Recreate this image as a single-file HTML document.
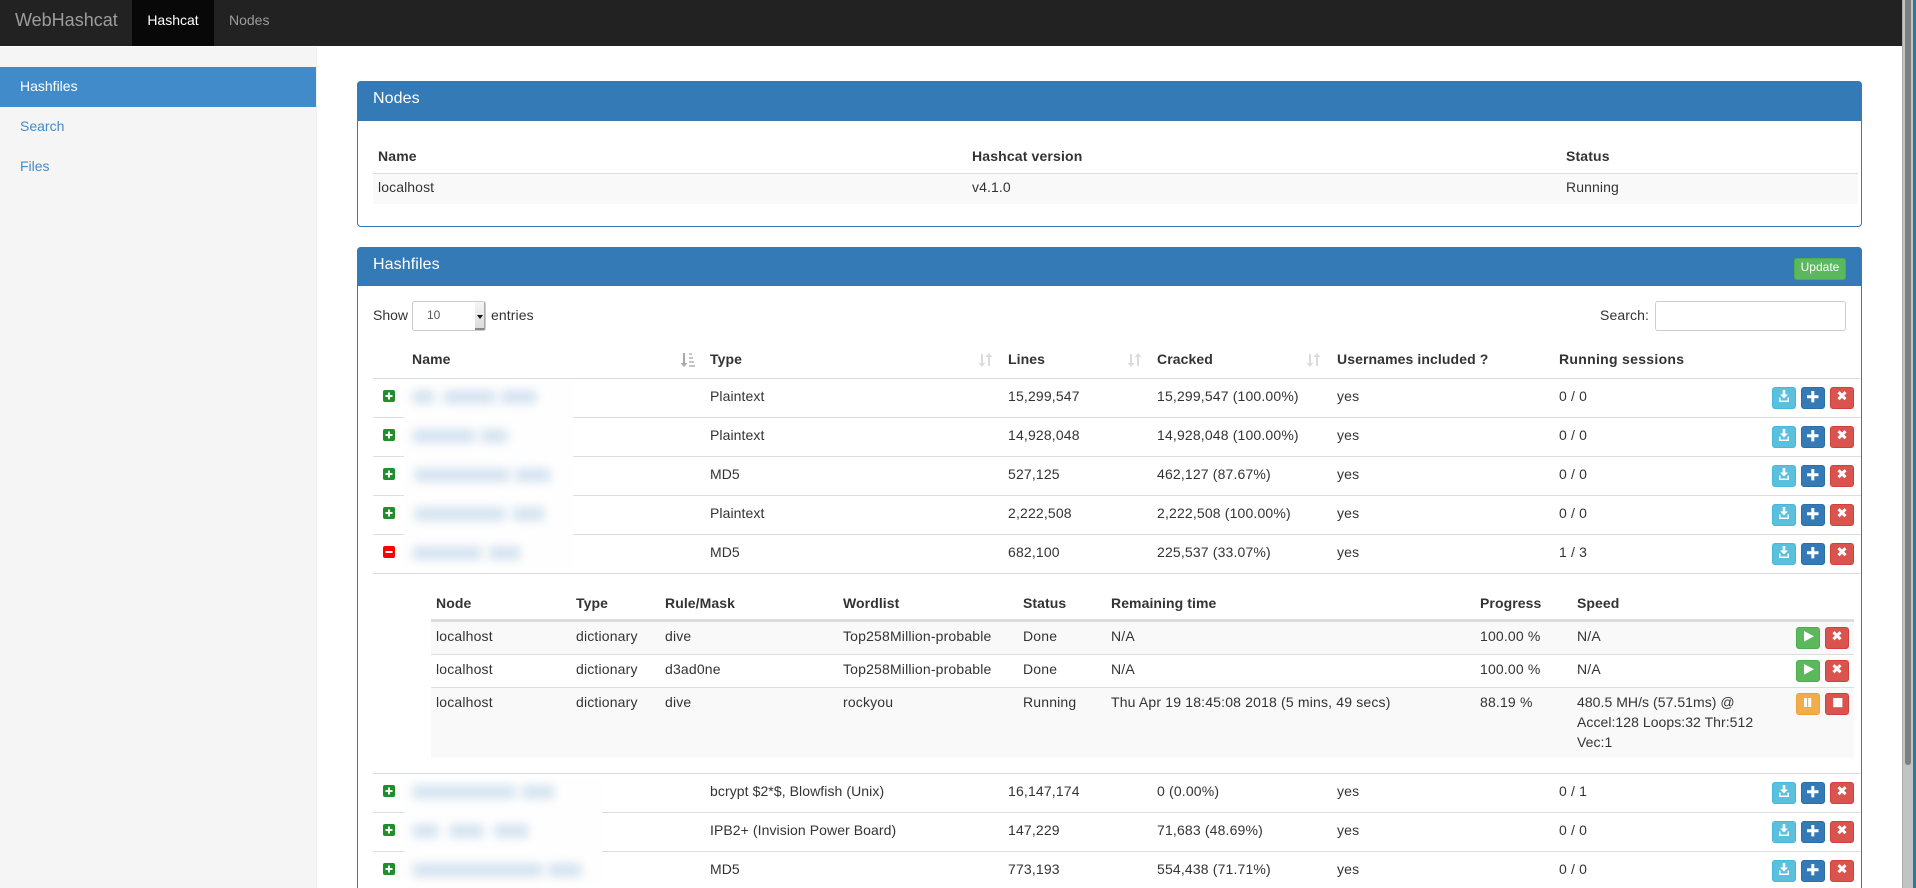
<!DOCTYPE html>
<html lang="en">
<head>
<meta charset="utf-8">
<title>WebHashcat</title>
<style>
*{box-sizing:border-box}
html,body{margin:0;padding:0;width:1916px;height:888px;overflow:hidden;background:#fff}
body{font-family:"Liberation Sans",Arial,sans-serif;font-size:14px;line-height:20px;color:#333;position:relative}
.abs{position:absolute}
#nav{position:absolute;left:0;top:0;width:1902px;height:46px;background:#222}
#nav div{position:absolute;top:0;height:46px;line-height:40px;white-space:nowrap}
#side{position:absolute;left:0;top:47px;width:317px;height:841px;background:#f5f5f5;border-right:1px solid #eee}
#side div{position:absolute;left:0;width:316px;height:40px;padding:9px 20px;color:#428bca}
.panel{position:absolute;left:357px;width:1505px;border:1px solid #337ab7;border-radius:4px;background:#fff}
.ph{position:absolute;left:-1px;top:-1px;width:1505px;background:#337ab7;color:#fff;font-size:16px;border-radius:4px 4px 0 0;padding:8px 16px;line-height:20px;letter-spacing:.1px}
table{border-collapse:separate;border-spacing:0;table-layout:fixed}
th{text-align:left;font-weight:bold;vertical-align:top}
td{vertical-align:top}
#nt{position:absolute;left:373px;top:141px;width:1485px}
#nt th{padding:5px;height:33px;border-bottom:1px solid #ddd;letter-spacing:.15px}
#nt td{padding:3px 5px 0;height:30px;background:#f9f9f9;letter-spacing:.1px}
#mt{position:absolute;left:373px;top:339px;width:1488px}
#mt>thead>tr>th{padding:10px 8px 0;height:40px;border-bottom:1px solid #ddd;letter-spacing:.1px}
#mt>tbody>tr>td{padding:7px 8px 0;height:39px;border-bottom:1px solid #ddd;letter-spacing:.16px}
#mt>tbody>tr>td.t{letter-spacing:.08px}
#mt>tbody>tr>td.n{padding:0;height:200px}
#st{margin:0 0 0 58px;width:1423px}
#st th{padding:19px 5px 0;height:48px;border-bottom:3px solid #ddd;letter-spacing:.08px}
#st td{padding:4px 5px 0;height:33px;border-bottom:1px solid #ddd;letter-spacing:.17px}
#st tr.o td{background:#f9f9f9}
#st tr.l td{height:70px;border-bottom:0}
.btn{display:inline-block;position:relative;width:24px;height:22px;border-radius:3px;border:1px solid;vertical-align:top;margin-left:5px}
.btn svg{position:absolute;left:-1px;top:-1px;width:24px;height:22px}
.i{background:#5bc0de;border-color:#46b8da}
.p{background:#337ab7;border-color:#2e6da4}
.d{background:#d9534f;border-color:#d43f3a}
.s{background:#5cb85c;border-color:#4cae4c}
.w{background:#f0ad4e;border-color:#eea236}
.acts{position:absolute;left:1767px}
.tog{position:absolute;left:383px;width:12px;height:12px;border-radius:2px;background:#1f8e2b}
.tog svg{display:block;width:12px;height:12px}
.halo{position:absolute;background:#fefefe}
.b{position:absolute;height:12px;background:#cfe0ef;filter:blur(5px)}
.sort{position:absolute;top:352px;width:16px;height:16px}
</style>
</head>
<body>
<div id="nav">
<div style="left:15px;font-size:18px;color:#9d9d9d">WebHashcat</div>
<div style="left:132px;width:82px;background:#080808;color:#fff;text-align:center">Hashcat</div>
<div style="left:229px;color:#9d9d9d">Nodes</div>
</div>
<div id="side">
<div style="top:20px;background:#428bca;color:#fff">Hashfiles</div>
<div style="top:60px">Search</div>
<div style="top:100px">Files</div>
</div>

<div class="panel" style="top:81px;height:146px"><div class="ph" style="height:40px">Nodes</div></div>
<table id="nt">
<colgroup><col style="width:594px"><col style="width:594px"><col style="width:297px"></colgroup>
<thead><tr><th>Name</th><th>Hashcat version</th><th>Status</th></tr></thead>
<tbody><tr><td>localhost</td><td>v4.1.0</td><td>Running</td></tr></tbody>
</table>

<div class="panel" style="top:247px;height:660px"><div class="ph" style="height:39px">Hashfiles</div></div>
<div class="btn s abs" style="left:1794px;top:258px;width:52px;font-size:12px;line-height:14px;color:#fff;text-align:center;margin:0;padding-top:1px">Update</div>

<div class="abs" style="left:373px;top:305px">Show</div>
<div class="abs" style="left:412px;top:301px;width:74px;height:30px;border:1px solid #ccc;border-radius:3px;background:#fff;font-size:12px;line-height:27px;color:#555;padding-left:14px">10
<div class="abs" style="left:62px;top:0;width:10px;height:28px;background:linear-gradient(#f6f6f6,#dcdcdc);border-right:1px solid #aaa;border-bottom:2px solid #888"></div>
<div class="abs" style="left:64px;top:13px;width:0;height:0;border-left:3px solid transparent;border-right:3px solid transparent;border-top:4px solid #111"></div>
</div>
<div class="abs" style="left:491px;top:305px;letter-spacing:.1px">entries</div>
<div class="abs" style="left:1600px;top:305px;letter-spacing:.1px">Search:</div>
<div class="abs" style="left:1655px;top:301px;width:191px;height:30px;border:1px solid #ccc;border-radius:3px;background:#fff"></div>

<table id="mt">
<colgroup><col style="width:31px"><col style="width:298px"><col style="width:298px"><col style="width:149px"><col style="width:180px"><col style="width:222px"><col style="width:213px"><col style="width:97px"></colgroup>
<thead><tr><th></th><th>Name</th><th>Type</th><th>Lines</th><th>Cracked</th><th>Usernames included ?</th><th style="letter-spacing:.3px">Running sessions</th><th></th></tr></thead>
<tbody>
<tr><td></td><td></td><td class="t">Plaintext</td><td>15,299,547</td><td>15,299,547 (100.00%)</td><td>yes</td><td>0 / 0</td><td></td></tr>
<tr><td></td><td></td><td class="t">Plaintext</td><td>14,928,048</td><td>14,928,048 (100.00%)</td><td>yes</td><td>0 / 0</td><td></td></tr>
<tr><td></td><td></td><td class="t">MD5</td><td>527,125</td><td>462,127 (87.67%)</td><td>yes</td><td>0 / 0</td><td></td></tr>
<tr><td></td><td></td><td class="t">Plaintext</td><td>2,222,508</td><td>2,222,508 (100.00%)</td><td>yes</td><td>0 / 0</td><td></td></tr>
<tr><td></td><td></td><td class="t">MD5</td><td>682,100</td><td>225,537 (33.07%)</td><td>yes</td><td>1 / 3</td><td></td></tr>
<tr><td colspan="8" class="n">
<table id="st">
<colgroup><col style="width:140px"><col style="width:89px"><col style="width:178px"><col style="width:180px"><col style="width:88px"><col style="width:369px"><col style="width:97px"><col style="width:219px"><col style="width:63px"></colgroup>
<thead><tr><th>Node</th><th>Type</th><th>Rule/Mask</th><th>Wordlist</th><th>Status</th><th>Remaining time</th><th>Progress</th><th>Speed</th><th></th></tr></thead>
<tbody>
<tr class="o"><td>localhost</td><td>dictionary</td><td>dive</td><td>Top258Million-probable</td><td>Done</td><td>N/A</td><td>100.00 %</td><td>N/A</td><td></td></tr>
<tr><td>localhost</td><td>dictionary</td><td>d3ad0ne</td><td>Top258Million-probable</td><td>Done</td><td>N/A</td><td>100.00 %</td><td>N/A</td><td></td></tr>
<tr class="o l"><td>localhost</td><td>dictionary</td><td>dive</td><td>rockyou</td><td>Running</td><td>Thu Apr 19 18:45:08 2018 (5 mins, 49 secs)</td><td>88.19 %</td><td style="letter-spacing:.05px">480.5 MH/s (57.51ms) @<br>Accel:128 Loops:32 Thr:512<br>Vec:1</td><td></td></tr>
</tbody>
</table>
</td></tr>
<tr><td></td><td></td><td class="t">bcrypt $2*$, Blowfish (Unix)</td><td>16,147,174</td><td>0 (0.00%)</td><td>yes</td><td>0 / 1</td><td></td></tr>
<tr><td></td><td></td><td class="t">IPB2+ (Invision Power Board)</td><td>147,229</td><td>71,683 (48.69%)</td><td>yes</td><td>0 / 0</td><td></td></tr>
<tr><td></td><td></td><td class="t">MD5</td><td>773,193</td><td>554,438 (71.71%)</td><td>yes</td><td>0 / 0</td><td></td></tr>
</tbody>
</table>

<svg class="sort" style="left:680px" viewBox="0 0 16 16"><path fill="#aaa" d="M3 1h2v10h2.500L4 15 .5 11H3z"/><path fill="#c4c4c4" d="M9 1h3v2H9zM9 5h4v2H9zM9 9h5v2H9zM9 13h6v2H9z"/></svg>
<svg class="sort" style="left:978px" viewBox="0 0 16 16"><path fill="#dcdcdc" d="M3 2h2v9h2.500L4 15 .5 11H3zM10 14V5H7.500L11 1l3.500 4H12v9z"/></svg>
<svg class="sort" style="left:1127px" viewBox="0 0 16 16"><path fill="#dcdcdc" d="M3 2h2v9h2.500L4 15 .5 11H3zM10 14V5H7.500L11 1l3.500 4H12v9z"/></svg>
<svg class="sort" style="left:1306px" viewBox="0 0 16 16"><path fill="#dcdcdc" d="M3 2h2v9h2.500L4 15 .5 11H3zM10 14V5H7.500L11 1l3.500 4H12v9z"/></svg>

<div class="halo" style="left:404px;top:381px;width:169px;height:186px"></div>
<div class="halo" style="left:404px;top:779px;width:198px;height:104px"></div>
<div class="b" style="left:413px;top:391px;width:21px"></div><div class="b" style="left:444px;top:391px;width:51px"></div><div class="b" style="left:501px;top:391px;width:35px"></div>
<div class="b" style="left:413px;top:430px;width:62px"></div><div class="b" style="left:481px;top:430px;width:26px"></div>
<div class="b" style="left:415px;top:469px;width:94px"></div><div class="b" style="left:515px;top:469px;width:35px"></div>
<div class="b" style="left:415px;top:508px;width:90px"></div><div class="b" style="left:513px;top:508px;width:31px"></div>
<div class="b" style="left:413px;top:547px;width:68px"></div><div class="b" style="left:489px;top:547px;width:31px"></div>
<div class="b" style="left:413px;top:786px;width:102px"></div><div class="b" style="left:522px;top:786px;width:32px"></div>
<div class="b" style="left:413px;top:825px;width:25px"></div><div class="b" style="left:450px;top:825px;width:33px"></div><div class="b" style="left:495px;top:825px;width:33px"></div>
<div class="b" style="left:413px;top:864px;width:129px"></div><div class="b" style="left:548px;top:864px;width:33px"></div>

<div class="tog" style="top:390px"><svg viewBox="0 0 12 12"><path fill="#fff" d="M5 2.500h2V5h2.500v2H7v2.500H5V7H2.500V5H5z"/></svg></div>
<div class="tog" style="top:429px"><svg viewBox="0 0 12 12"><path fill="#fff" d="M5 2.500h2V5h2.500v2H7v2.500H5V7H2.500V5H5z"/></svg></div>
<div class="tog" style="top:468px"><svg viewBox="0 0 12 12"><path fill="#fff" d="M5 2.500h2V5h2.500v2H7v2.500H5V7H2.500V5H5z"/></svg></div>
<div class="tog" style="top:507px"><svg viewBox="0 0 12 12"><path fill="#fff" d="M5 2.500h2V5h2.500v2H7v2.500H5V7H2.500V5H5z"/></svg></div>
<div class="tog" style="top:546px;background:#f00"><svg viewBox="0 0 12 12"><path fill="#fff" d="M2.500 5h7v2h-7z"/></svg></div>
<div class="tog" style="top:785px"><svg viewBox="0 0 12 12"><path fill="#fff" d="M5 2.500h2V5h2.500v2H7v2.500H5V7H2.500V5H5z"/></svg></div>
<div class="tog" style="top:824px"><svg viewBox="0 0 12 12"><path fill="#fff" d="M5 2.500h2V5h2.500v2H7v2.500H5V7H2.500V5H5z"/></svg></div>
<div class="tog" style="top:863px"><svg viewBox="0 0 12 12"><path fill="#fff" d="M5 2.500h2V5h2.500v2H7v2.500H5V7H2.500V5H5z"/></svg></div>

<svg width="0" height="0" style="position:absolute">
<symbol id="dl" viewBox="0 0 24 22"><path fill="#fff" d="M10.700 3h2.600v4.500h2.700L12 11.500 8 7.500h2.700zM7 10.500h1.500v3h7v-3H17V15H7z"/></symbol>
<symbol id="pl" viewBox="0 0 24 22"><path fill="#fff" d="M10.300 4h3v4.200h4.200v3h-4.200v4.200h-3v-4.200H6v-3h4.300z"/></symbol>
<symbol id="xx" viewBox="0 0 24 22"><path stroke="#fff" stroke-width="3" d="M8.500 5.200l7 7M15.500 5.200l-7 7"/></symbol>
<symbol id="pa" viewBox="0 0 24 22"><path fill="#fff" d="M8 4l10 5.300-10 5.300z"/></symbol>
<symbol id="pu" viewBox="0 0 24 22"><path fill="#fff" d="M8 5h3v9H8zM12.200 5h3v9h-3z"/></symbol>
<symbol id="so" viewBox="0 0 24 22"><path fill="#fff" d="M8.200 5h9.200v9.200H8.200z"/></symbol>
</svg>

<div class="acts" style="top:387px"><span class="btn i"><svg><use href="#dl"/></svg></span><span class="btn p"><svg><use href="#pl"/></svg></span><span class="btn d"><svg><use href="#xx"/></svg></span></div>
<div class="acts" style="top:426px"><span class="btn i"><svg><use href="#dl"/></svg></span><span class="btn p"><svg><use href="#pl"/></svg></span><span class="btn d"><svg><use href="#xx"/></svg></span></div>
<div class="acts" style="top:465px"><span class="btn i"><svg><use href="#dl"/></svg></span><span class="btn p"><svg><use href="#pl"/></svg></span><span class="btn d"><svg><use href="#xx"/></svg></span></div>
<div class="acts" style="top:504px"><span class="btn i"><svg><use href="#dl"/></svg></span><span class="btn p"><svg><use href="#pl"/></svg></span><span class="btn d"><svg><use href="#xx"/></svg></span></div>
<div class="acts" style="top:543px"><span class="btn i"><svg><use href="#dl"/></svg></span><span class="btn p"><svg><use href="#pl"/></svg></span><span class="btn d"><svg><use href="#xx"/></svg></span></div>
<div class="acts" style="top:782px"><span class="btn i"><svg><use href="#dl"/></svg></span><span class="btn p"><svg><use href="#pl"/></svg></span><span class="btn d"><svg><use href="#xx"/></svg></span></div>
<div class="acts" style="top:821px"><span class="btn i"><svg><use href="#dl"/></svg></span><span class="btn p"><svg><use href="#pl"/></svg></span><span class="btn d"><svg><use href="#xx"/></svg></span></div>
<div class="acts" style="top:860px"><span class="btn i"><svg><use href="#dl"/></svg></span><span class="btn p"><svg><use href="#pl"/></svg></span><span class="btn d"><svg><use href="#xx"/></svg></span></div>

<div class="acts" style="left:1791px;top:627px"><span class="btn s"><svg><use href="#pa"/></svg></span><span class="btn d"><svg><use href="#xx"/></svg></span></div>
<div class="acts" style="left:1791px;top:660px"><span class="btn s"><svg><use href="#pa"/></svg></span><span class="btn d"><svg><use href="#xx"/></svg></span></div>
<div class="acts" style="left:1791px;top:693px"><span class="btn w"><svg><use href="#pu"/></svg></span><span class="btn d"><svg><use href="#so"/></svg></span></div>

<div class="abs" style="left:1902px;top:0;width:11px;height:888px;background:#c2c3c3;border-left:1px solid #aaa"></div>
<div class="abs" style="left:1905px;top:0;width:6px;height:765px;background:#7c8080;border-radius:0 0 3px 3px"></div>
<div class="abs" style="left:1913px;top:0;width:3px;height:888px;background:#2b7a96"></div>
</body>
</html>
